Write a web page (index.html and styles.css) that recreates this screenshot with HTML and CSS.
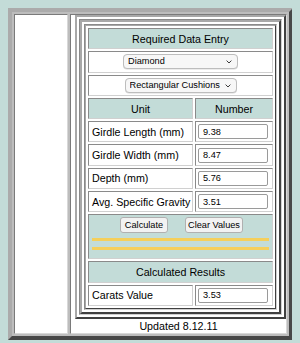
FILE: index.html
```html
<!DOCTYPE html>
<html>
<head>
<meta charset="utf-8">
<title>Carat Weight Calculator</title>
<link rel="stylesheet" href="styles.css">
</head>
<body>
<div class="outer">
  <div class="side"></div>
  <div class="main">
    <div class="frame-a">
      <div class="cell-a">
        <div class="frame-b">
          <div class="cell-b">
            <table class="calc">
              <colgroup><col class="c1"><col class="c2"></colgroup>
              <tr><th colspan="2" class="head">Required Data Entry</th></tr>
              <tr><td colspan="2" class="ctr">
                <span class="sel sel-a"><select><option>Diamond</option></select><svg class="chev" viewBox="0 0 6 4" width="6" height="4"><polyline points="0.6,0.6 3,3 5.4,0.6" fill="none" stroke="#3a3a3a" stroke-width="1"/></svg></span>
              </td></tr>
              <tr><td colspan="2" class="ctr">
                <span class="sel sel-b"><select><option>Rectangular Cushions</option></select><svg class="chev" viewBox="0 0 6 4" width="6" height="4"><polyline points="0.6,0.6 3,3 5.4,0.6" fill="none" stroke="#3a3a3a" stroke-width="1"/></svg></span>
              </td></tr>
              <tr><th class="head">Unit</th><th class="head">Number</th></tr>
              <tr><td class="label">Girdle Length (mm)</td><td class="val"><input type="text" value="9.38"></td></tr>
              <tr><td class="label">Girdle Width (mm)</td><td class="val"><input type="text" value="8.47"></td></tr>
              <tr><td class="label">Depth (mm)</td><td class="val"><input type="text" value="5.76"></td></tr>
              <tr><td class="label">Avg. Specific Gravity</td><td class="val"><input type="text" value="3.51"></td></tr>
              <tr><td colspan="2" class="actions">
                <div class="btns"><button class="btn btn-calc">Calculate</button><button class="btn btn-clear">Clear Values</button></div>
                <div class="rule"></div>
                <div class="rule"></div>
              </td></tr>
              <tr><th colspan="2" class="head">Calculated Results</th></tr>
              <tr><td class="label">Carats Value</td><td class="val"><input type="text" value="3.53"></td></tr>
            </table>
          </div>
        </div>
      </div>
    </div>
    <div class="updated">Updated 8.12.11</div>
  </div>
</div>
</body>
</html>
```
FILE: styles.css
```css
* { box-sizing: border-box; }

body {
  margin: 8px;
  background: #c3dcd8;
  font-family: "Liberation Sans", Arial, sans-serif;
  font-size: 10.7px;
  color: #000;
}

.outer {
  display: flex;
  gap: 2px;
  width: 285px;
  height: 332px;
  padding: 2px;
  border: 4px solid;
  border-color: #ababab #474747 #474747 #ababab;
  background: #bdbdbd;
}

.side {
  width: 54px;
  background: #fff;
  border: 1px solid;
  border-color: #7a7a7a #d8d8d8 #d8d8d8 #7a7a7a;
}

.main {
  flex: 1;
  display: flex;
  flex-direction: column;
  padding-left: 4px;
  background: #fff;
  border: 1px solid;
  border-color: #7a7a7a #d8d8d8 #d8d8d8 #7a7a7a;
}

.frame-a, .frame-b {
  padding: 2px;
  border: 2px solid;
  border-color: #a8a8a8 #404040 #404040 #a8a8a8;
  background: #fff;
}

.cell-a, .cell-b {
  border: 1px solid;
  border-color: #8a8a8a #d0d0d0 #d0d0d0 #8a8a8a;
}

.calc {
  width: 191px;
  table-layout: fixed;
  border-collapse: separate;
  border-spacing: 2px;
  border: 1px solid;
  border-color: #a8a8a8 #404040 #404040 #a8a8a8;
  background: #fff;
}

.c1 { width: 105px; }
.c2 { width: 78px; }

.calc th, .calc td {
  height: 21.3px;
  padding: 0 3px;
  border: 1px solid;
  border-color: #8a8a8a #d0d0d0 #d0d0d0 #8a8a8a;
  font-weight: normal;
  white-space: nowrap;
  vertical-align: middle;
}

.calc .head {
  background: #c3dcd8;
  text-align: center;
}

.calc .ctr { text-align: center; }

.calc .label { text-align: left; }

.calc .val { padding: 0 2px; }

.sel {
  position: relative;
  display: inline-block;
  vertical-align: middle;
}

.sel select {
  appearance: none;
  -webkit-appearance: none;
  display: block;
  height: 15px;
  padding: 0 0 0 4px;
  border: 1px solid #bdbdbd;
  border-radius: 4px;
  background: #f7f7f7;
  font-family: "Liberation Sans", Arial, sans-serif;
  font-size: 9.2px;
  line-height: 13px;
  color: #000;
  box-shadow: 0 0.5px 0.5px rgba(0,0,0,0.15);
}

.sel-a select { width: 115px; }
.sel-b select { width: 112px; }

.chev {
  position: absolute;
  right: 6px;
  top: 6px;
  pointer-events: none;
}

.val input {
  display: block;
  width: 70px;
  height: 15px;
  padding: 0 4px;
  border: 1px solid #9a9a9a;
  border-radius: 2px;
  background: #fff;
  font-family: "Liberation Sans", Arial, sans-serif;
  font-size: 9.2px;
  color: #000;
}

.calc .actions {
  height: 45px;
  padding: 2px 3px 0;
  vertical-align: top;
  background: #c3dcd8;
}

.btns {
  display: flex;
  justify-content: center;
  gap: 17px;
  padding-left: 2px;
  height: 16px;
}

.btn {
  height: 16px;
  padding: 0;
  border: 1px solid #b0b0b0;
  border-radius: 3px;
  background: #f2f2f2;
  font-family: "Liberation Sans", Arial, sans-serif;
  font-size: 9.2px;
  line-height: 14px;
  color: #000;
}

.btn-calc { width: 48px; }
.btn-clear { width: 58px; }

.rule {
  height: 3px;
  margin-top: 5px;
  background: #f5cf5b;
}

.rule + .rule { margin-top: 6px; }

.updated {
  flex: 1;
  display: flex;
  align-items: center;
  justify-content: center;
  padding-right: 4px;
}
```
